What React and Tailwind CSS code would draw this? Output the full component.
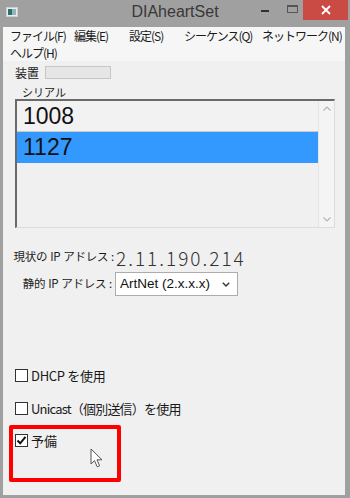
import React from "react";

const jp = { fontFamily: '"Noto Sans CJK JP", "Noto Sans", sans-serif' };

function CheckBox({ checked }) {
  return (
    <div className="w-[13px] h-[13px] bg-white border border-[#333] flex items-center justify-center shrink-0">
      {checked && (
        <svg width="11" height="11" viewBox="0 0 11 11">
          <path d="M1.5 5.5 L4.2 8.3 L9.5 1.8" fill="none" stroke="#111" strokeWidth="2" />
        </svg>
      )}
    </div>
  );
}

export default function App() {
  return (
    <div className="relative w-[350px] h-[498px] bg-[#a0a0a0] flex flex-col overflow-hidden" style={jp}>
      {/* title bar */}
      <div className="relative h-[27px] flex items-center justify-center shrink-0">
        <div className="absolute left-[6px] top-[7px] w-[12px] h-[10px] bg-[#e8eef0] border border-[#d0d0d0] flex p-[1px]">
          <div className="w-[4px] h-full bg-[#2e6f73]" />
          <div className="flex-1 bg-[#8fb6b8]" />
        </div>
        <span className="text-[16px] text-[#383838] leading-none -mt-[3px]" style={{ fontFamily: '"Liberation Sans", sans-serif' }}>
          DIAheartSet
        </span>
        <div className="absolute left-[261px] top-[10px] w-[8px] h-[2px] bg-[#303030]" />
        <div className="absolute left-[287px] top-[5px] w-[11px] h-[8px] border border-[#555] border-t-2" />
        <div className="absolute left-[303px] top-0 w-[45px] h-[20px] bg-[#c94b44] flex items-center justify-center">
          <svg width="10" height="10" viewBox="0 0 10 10">
            <path d="M1 1 L9 9 M9 1 L1 9" stroke="#fff" strokeWidth="1.8" />
          </svg>
        </div>
      </div>

      {/* client */}
      <div className="flex-1 ml-[3px] mr-[5px] mb-[3px] bg-[#f0f0f0] flex flex-col">
        {/* menu */}
        <div className="h-[34px] bg-[#f6f6f6] pl-[7px] text-[12px] text-[#1a1a1a] tracking-[-1px] leading-[17px] flex flex-col shrink-0">
          <div className="flex whitespace-nowrap">
            <span className="w-[64px]">ファイル(F)</span>
            <span className="w-[55px]">編集(E)</span>
            <span className="w-[55px]">設定(S)</span>
            <span className="w-[78px]">シーケンス(Q)</span>
            <span>ネットワーク(N)</span>
          </div>
          <div className="flex whitespace-nowrap">
            <span>ヘルプ(H)</span>
          </div>
        </div>

        {/* device */}
        <div className="mt-[5px] h-[13px] flex items-center pl-[12px]">
          <span className="text-[12px] text-[#1a1a1a] w-[30px] leading-none">装置</span>
          <div className="w-[66px] h-[13px] bg-[#e6e6e6] border border-[#c6c6c6]" />
        </div>

        {/* serial label */}
        <div className="mt-[7px] h-[13px] pl-[19px] text-[11px] leading-[13px] text-[#1a1a1a]">シリアル</div>

        {/* list box */}
        <div className="ml-[12px] w-[320px] h-[129px] border-t-2 border-l-2 border-[#6a6a6a] border-r border-b border-r-[#dcdcdc] border-b-[#dcdcdc] flex bg-[#f0f0f0]">
          <div className="flex-1 flex flex-col" style={{ fontFamily: '"Liberation Sans", sans-serif' }}>
            <div className="h-[30px] flex items-center pl-[6px] text-[23px] text-[#111] bg-[#f2f2f2]">1008</div>
            <div className="h-[1px] bg-[#c9c9c9]" />
            <div className="h-[31px] flex items-center pl-[6px] text-[23px] text-[#111] bg-[#3399ff]">1127</div>
          </div>
          <div className="w-[16px] border-l border-[#e4e4e4] bg-[#f4f4f4] flex flex-col items-center justify-between py-[5px]">
            <svg width="8" height="5" viewBox="0 0 8 5">
              <path d="M0.5 4.5 L4 1 L7.5 4.5" fill="none" stroke="#b5b5b5" strokeWidth="1.2" />
            </svg>
            <svg width="8" height="5" viewBox="0 0 8 5">
              <path d="M0.5 0.5 L4 4 L7.5 0.5" fill="none" stroke="#b5b5b5" strokeWidth="1.2" />
            </svg>
          </div>
        </div>

        {/* current IP */}
        <div className="mt-[19px] h-[20px] flex items-center">
          <span className="w-[111px] flex justify-end gap-[3px] text-[11.5px] text-[#1a1a1a] tracking-[-0.3px] whitespace-nowrap">
            <span>現状の</span><span>IP</span><span>アドレス</span><span>:</span>
          </span>
          <span className="ml-[2px] text-[19px] font-light tracking-[2px] text-[#333] leading-none">2.11.190.214</span>
        </div>

        {/* static IP */}
        <div className="mt-[5px] h-[24px] flex items-center">
          <span className="w-[109px] flex justify-end gap-[3px] text-[11.5px] text-[#1a1a1a] tracking-[-0.3px] whitespace-nowrap">
            <span>静的</span><span>IP</span><span>アドレス</span><span>:</span>
          </span>
          <div className="ml-[3px] w-[123px] h-[24px] bg-white border border-[#acacac] flex items-center justify-between pl-[4px] pr-[7px]">
            <span className="text-[13.5px] text-[#111]" style={{ fontFamily: '"Liberation Sans", sans-serif' }}>ArtNet (2.x.x.x)</span>
            <svg width="8" height="5" viewBox="0 0 8 5">
              <path d="M0.8 0.8 L4 4 L7.2 0.8" fill="none" stroke="#333" strokeWidth="1.4" />
            </svg>
          </div>
        </div>

        {/* checkboxes */}
        <div className="mt-[73px] h-[13px] flex items-center pl-[12px] gap-[3px]">
          <CheckBox />
          <span className="text-[13px] text-[#1a1a1a] leading-none tracking-[-0.3px]">DHCP を使用</span>
        </div>
        <div className="mt-[20px] h-[13px] flex items-center pl-[12px] gap-[3px]">
          <CheckBox />
          <span className="text-[13px] text-[#1a1a1a] leading-none tracking-[-0.8px] whitespace-nowrap">Unicast（個別送信）を使用</span>
        </div>
        <div className="mt-[19px] h-[13px] flex items-center pl-[12px] gap-[3px]">
          <CheckBox checked />
          <span className="text-[13px] text-[#1a1a1a] leading-none">予備</span>
        </div>
      </div>

      {/* red annotation rectangle */}
      <div className="absolute left-[9px] top-[425px] w-[112px] h-[57px] border-[4px] border-[#ff0000] rounded-[2px]" />

      {/* mouse cursor */}
      <svg className="absolute left-[90px] top-[448px]" width="14" height="21" viewBox="0 0 14 21">
        <path d="M1 1 L1 16 L4.5 12.6 L7.2 18.8 L9.6 17.8 L7 11.8 L12 11.8 Z" fill="#fff" stroke="#555" strokeWidth="1" strokeLinejoin="round" />
      </svg>
    </div>
  );
}
